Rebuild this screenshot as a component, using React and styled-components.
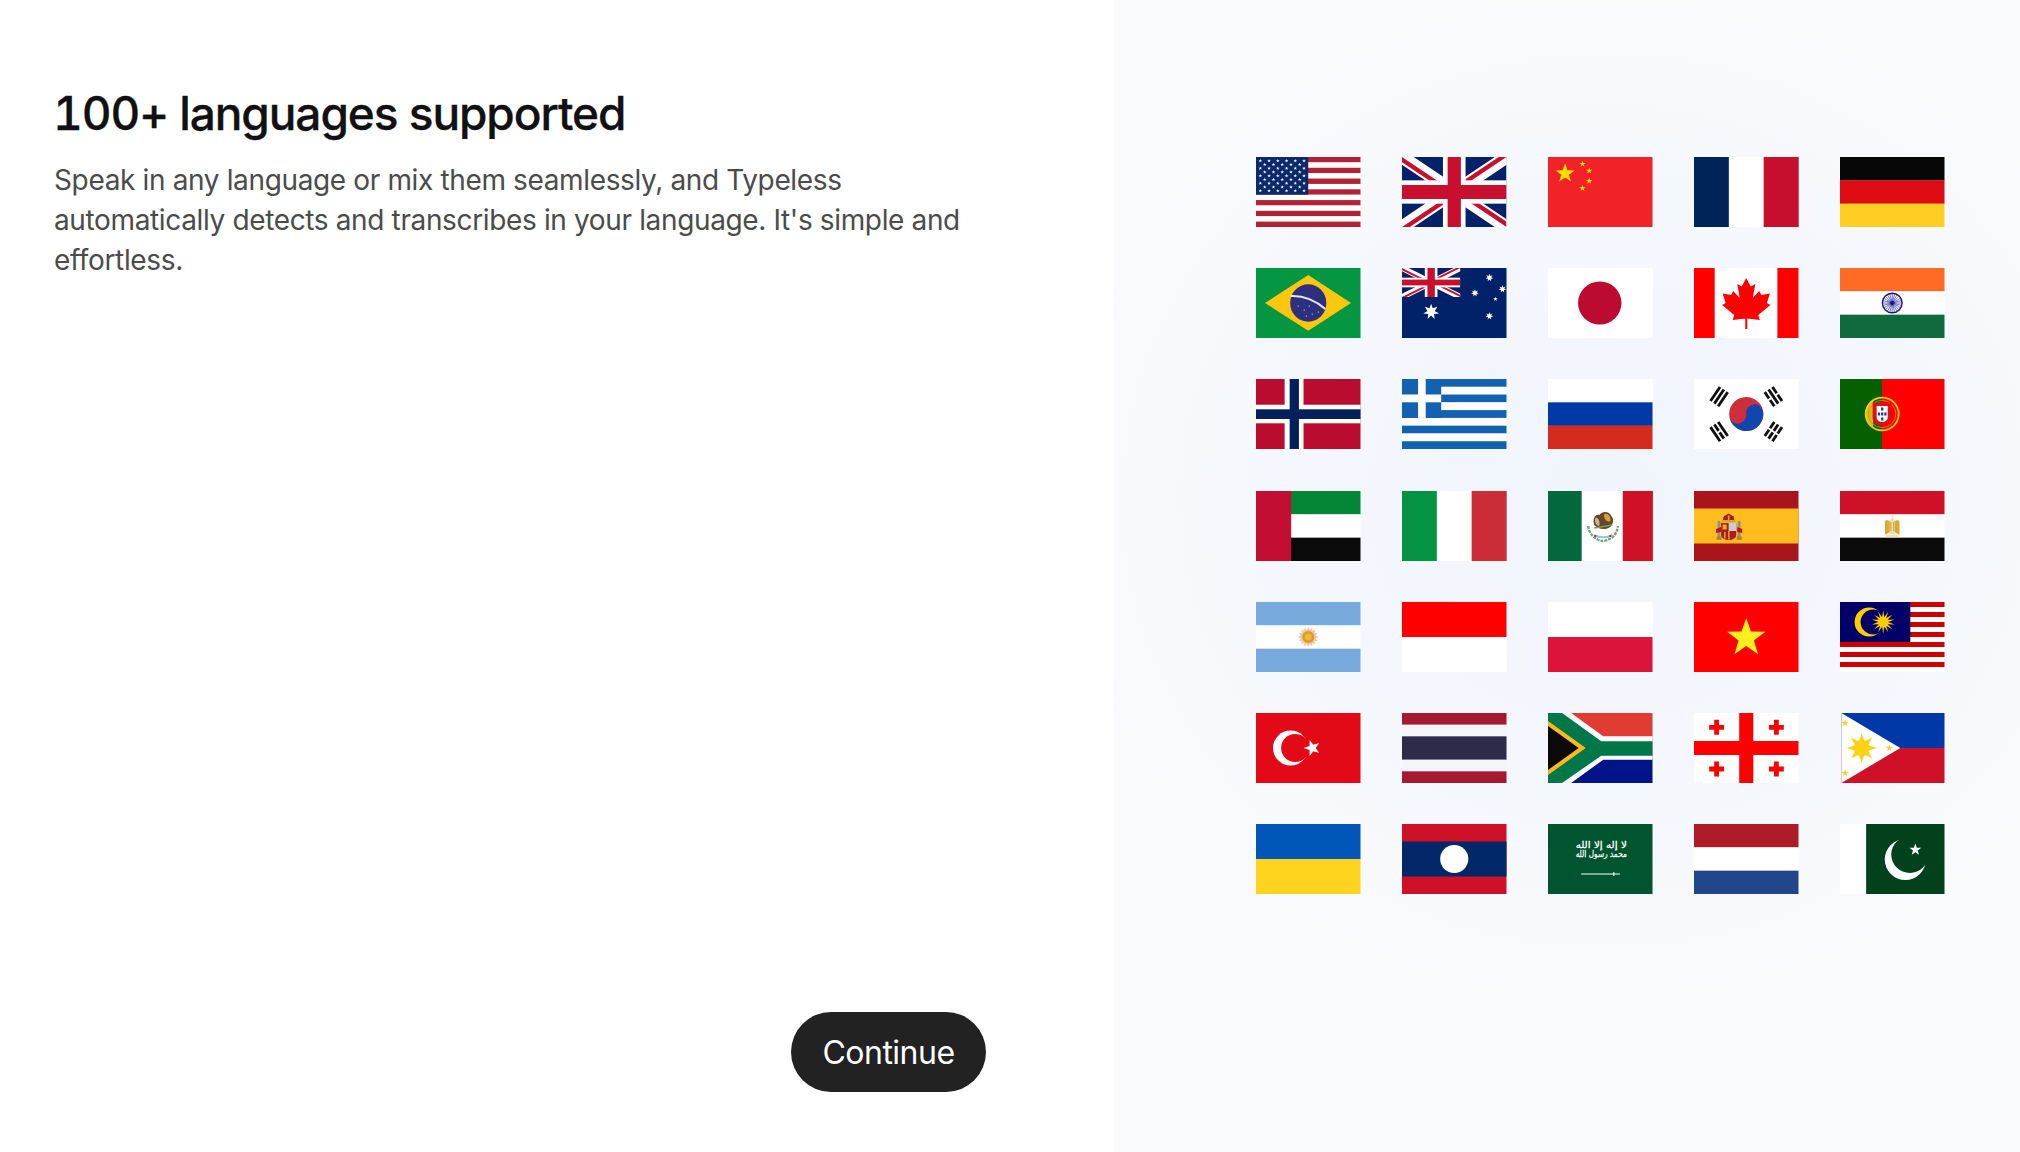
import React from "react";
import styled, { createGlobalStyle } from "styled-components";

const GlobalStyle = createGlobalStyle`
  html, body {
    margin: 0;
    padding: 0;
    background: #fff;
  }
  body {
    font-family: Inter, "Liberation Sans", sans-serif;
    overflow: hidden;
  }
`;

const Page = styled.div`
  display: grid;
  grid-template-columns: 1114px 1fr;
  width: 2020px;
  height: 1152px;
`;

const Intro = styled.section`
  display: flex;
  flex-direction: column;
  padding: 84px 128px 60px 54px;
  background: #fff;
`;

const Title = styled.h1`
  margin: 0 0 18px -1px;
  font-size: 46px;
  line-height: 58px;
  font-weight: 500;
  letter-spacing: -1.08px;
  font-variant-numeric: tabular-nums;
  -webkit-text-stroke: 0.3px #111;
  color: #111;
`;

const Lead = styled.p`
  margin: 0;
  width: 960px;
  font-size: 28px;
  line-height: 40px;
  font-weight: 400;
  letter-spacing: -0.36px;
  color: #4b4b4b;
`;

const ContinueButton = styled.button`
  align-self: flex-end;
  margin-top: auto;
  width: 195px;
  height: 80px;
  border: 0;
  border-radius: 40px;
  background: #222;
  color: #fff;
  font-family: inherit;
  font-size: 32px;
  font-weight: 400;
  letter-spacing: -0.5px;
`;

const FlagPanel = styled.aside`
  padding: 157px 0 0 142px;
  background: radial-gradient(ellipse 560px 520px at 490px 500px, #f0f4fc 0%, #f4f7fc 55%, #f9fafc 100%);
`;

const FlagGrid = styled.div`
  display: grid;
  grid-template-columns: repeat(5, 104.5px);
  grid-auto-rows: 70px;
  column-gap: 41.5px;
  row-gap: 41.2px;
`;

const Flag = styled.svg`
  display: block;
  width: 104.5px;
  height: 70px;
`;

// points for an n-pointed star
const star = (cx, cy, r, n = 5, inner = r * 0.4) => {
  const pts = [];
  for (let i = 0; i < n * 2; i++) {
    const rad = i % 2 ? inner : r;
    const a = (Math.PI * i) / n - Math.PI / 2;
    pts.push(`${(cx + rad * Math.cos(a)).toFixed(2)},${(cy + rad * Math.sin(a)).toFixed(2)}`);
  }
  return pts.join(" ");
};

const HBars = ({ colors }) =>
  colors.map((c, i) => (
    <rect key={i} x="0" y={(70 / colors.length) * i} width="104" height={70 / colors.length + 0.2} fill={c} />
  ));

const VBars = ({ colors }) =>
  colors.map((c, i) => (
    <rect key={i} x={(104 / colors.length) * i} y="0" width={104 / colors.length + 0.2} height="70" fill={c} />
  ));

const Union = ({ id, width, height }) => (
  <svg x="0" y="0" width={width} height={height} viewBox="0 0 60 30" preserveAspectRatio="none">
    <clipPath id={id}>
      <path d="M30 15h30v15zv15H0zH0V0zV0h30z" />
    </clipPath>
    <rect width="60" height="30" fill="#012169" />
    <path d="M0 0L60 30M60 0L0 30" stroke="#fff" strokeWidth="6" />
    <path d="M0 0L60 30M60 0L0 30" stroke="#c8102e" strokeWidth="4" clipPath={`url(#${id})`} />
    <rect x="23.5" width="13" height="30" fill="#fff" />
    <rect y="10" width="60" height="10" fill="#fff" />
    <rect x="26.2" width="7.6" height="30" fill="#c8102e" />
    <rect y="12" width="60" height="6" fill="#c8102e" />
  </svg>
);

const Trigram = ({ cx, cy, angle, breaks }) => (
  <g transform={`rotate(${angle} ${cx} ${cy})`} fill="#111">
    {[-4.6, 0, 4.6].map((off, i) =>
      breaks[i] ? (
        <g key={i}>
          <rect x={cx - 8.5} y={cy + off - 1.4} width="7.6" height="2.8" />
          <rect x={cx + 0.9} y={cy + off - 1.4} width="7.6" height="2.8" />
        </g>
      ) : (
        <rect key={i} x={cx - 8.5} y={cy + off - 1.4} width="17" height="2.8" />
      )
    )}
  </g>
);

const flags = [
  {
    name: "United States",
    art: (
      <>
        {Array.from({ length: 13 }, (_, i) => (
          <rect key={i} y={(70 / 13) * i} width="104" height={70 / 13 + 0.1} fill={i % 2 ? "#fff" : "#b22234"} />
        ))}
        <rect width="52" height="37.7" fill="#0a2a6b" />
        {Array.from({ length: 9 }, (_, r) =>
          Array.from({ length: r % 2 ? 5 : 6 }, (_, c) => (
            <polygon
              key={`${r}-${c}`}
              points={star((r % 2 ? 8.7 : 4.3) + c * 8.7, 3.8 + r * 3.75, 1.9, 5, 0.8)}
              fill="#fff"
            />
          ))
        )}
      </>
    ),
  },
  { name: "United Kingdom", art: <Union id="uk-clip" width="104" height="70" /> },
  {
    name: "China",
    art: (
      <>
        <rect width="104" height="70" fill="#f12228" />
        <polygon points={star(17, 16.5, 10)} fill="#ffde00" />
        <polygon points={star(34.4, 7, 3.3)} fill="#ffde00" />
        <polygon points={star(41, 13.7, 3.3)} fill="#ffde00" />
        <polygon points={star(41, 24, 3.3)} fill="#ffde00" />
        <polygon points={star(34.4, 31.3, 3.3)} fill="#ffde00" />
      </>
    ),
  },
  { name: "France", art: <VBars colors={["#012458", "#fff", "#c60f2e"]} /> },
  { name: "Germany", art: <HBars colors={["#070707", "#dd0c13", "#ffce22"]} /> },
  {
    name: "Brazil",
    art: (
      <>
        <rect width="104" height="70" fill="#059641" />
        <polygon points="9,35 52,7 94.6,35 52,62.7" fill="#fdc70f" />
        <ellipse cx="52" cy="35" rx="18" ry="18.7" fill="#2d307e" />
        <path d="M34.5 28C47 27 60 33 69 41" fill="none" stroke="#e6e6e6" strokeWidth="2" />
        {[[42, 38], [48, 42], [53, 38], [56, 46], [62, 44], [50, 48]].map(([x, y]) => (
          <circle key={`${x}-${y}`} cx={x} cy={y} r="0.6" fill="#fff" />
        ))}
      </>
    ),
  },
  {
    name: "Australia",
    art: (
      <>
        <rect width="104" height="70" fill="#012169" />
        <Union id="au-clip" width="58" height="29" />
        <polygon points={star(29, 43.7, 8, 7, 3.7)} fill="#fff" />
        <polygon points={star(87, 9.7, 4, 7, 1.8)} fill="#fff" />
        <polygon points={star(100, 21, 4, 7, 1.8)} fill="#fff" />
        <polygon points={star(72.6, 25, 4, 7, 1.8)} fill="#fff" />
        <polygon points={star(93, 31, 2.3, 5, 1)} fill="#fff" />
        <polygon points={star(87, 48, 4, 7, 1.8)} fill="#fff" />
      </>
    ),
  },
  {
    name: "Japan",
    art: (
      <>
        <rect width="104" height="70" fill="#fff" />
        <circle cx="51.5" cy="35" r="21.6" fill="#bc0a30" />
      </>
    ),
  },
  {
    name: "Canada",
    art: (
      <>
        <rect width="104" height="70" fill="#fff" />
        <rect width="20.6" height="70" fill="#ff0000" />
        <rect x="83" width="21" height="70" fill="#ff0000" />
        <polygon
          points="52,10 56.5,18.5 61,16 58.5,30 65,23 67,27 75.5,25.5 72.5,35 76,37 64,47 65.5,52 53,50.5 53,61 51,61 51,50.5 38.5,52 40,47 28,37 31.5,35 28.5,25.5 37,27 39,23 45.5,30 43,16 47.5,18.5"
          fill="#ff0000"
        />
      </>
    ),
  },
  {
    name: "India",
    art: (
      <>
        <HBars colors={["#ff6a24", "#fff", "#0f6a3e"]} />
        <circle cx="52" cy="35" r="9.8" fill="#fff" stroke="#14148c" strokeWidth="1.4" />
        {Array.from({ length: 24 }, (_, i) => (
          <line
            key={i}
            x1="52"
            y1="35"
            x2={52 + 9 * Math.cos((i * Math.PI) / 12)}
            y2={35 + 9 * Math.sin((i * Math.PI) / 12)}
            stroke="#14148c"
            strokeWidth="0.6"
          />
        ))}
        <circle cx="52" cy="35" r="2" fill="#14148c" />
      </>
    ),
  },
  {
    name: "Norway",
    art: (
      <>
        <rect width="104" height="70" fill="#ba0c2f" />
        <rect x="28.5" width="18.8" height="70" fill="#fff" />
        <rect y="25.7" width="104" height="18.6" fill="#fff" />
        <rect x="33.5" width="9.2" height="70" fill="#00205b" />
        <rect y="30.3" width="104" height="9.7" fill="#00205b" />
      </>
    ),
  },
  {
    name: "Greece",
    art: (
      <>
        {Array.from({ length: 9 }, (_, i) => (
          <rect key={i} y={(70 / 9) * i} width="104" height={70 / 9 + 0.1} fill={i % 2 ? "#fff" : "#1361b1"} />
        ))}
        <rect width="39" height="38.9" fill="#1361b1" />
        <rect x="16" width="7.6" height="38.9" fill="#fff" />
        <rect y="15.5" width="39" height="7.8" fill="#fff" />
      </>
    ),
  },
  { name: "Russia", art: <HBars colors={["#fff", "#0038a5", "#d52b1e"]} /> },
  {
    name: "South Korea",
    art: (
      <>
        <rect width="104" height="70" fill="#fff" />
        <g transform="rotate(-8 52 35)">
          <circle cx="52" cy="35" r="17" fill="#cd2e3a" />
          <path d="M35 35A8.5 8.5 0 0 0 52 35A8.5 8.5 0 0 1 69 35A17 17 0 0 1 35 35Z" fill="#0f47af" />
        </g>
        <Trigram cx={25} cy={17.6} angle={-56} breaks={[false, false, false]} />
        <Trigram cx={79} cy={17.6} angle={56} breaks={[true, false, true]} />
        <Trigram cx={25} cy={52.6} angle={56} breaks={[false, true, false]} />
        <Trigram cx={79} cy={52.6} angle={-56} breaks={[true, true, true]} />
      </>
    ),
  },
  {
    name: "Portugal",
    art: (
      <>
        <rect width="104" height="70" fill="#ff0000" />
        <rect width="41.8" height="70" fill="#056100" />
        <path d="M25.5 35A16.4 16.4 0 0 1 33 21L33 48A16.4 16.4 0 0 1 25.5 35Z" fill="#d9b81c" />
        <circle cx="42" cy="35" r="16.4" fill="none" stroke="#f0cf14" strokeWidth="1.8" />
        <circle cx="42" cy="35" r="13.6" fill="none" stroke="#c8a010" strokeWidth="0.8" />
        <path d="M32.5 23.5H51.5V39.5A9.5 7.5 0 0 1 32.5 39.5Z" fill="#e01010" />
        <path d="M36.5 27H47.5V38.5A5.5 4.5 0 0 1 36.5 38.5Z" fill="#fff" />
        {[[42, 30], [38.8, 35], [42, 35], [45.2, 35], [42, 40]].map(([x, y]) => (
          <rect key={`${x}-${y}`} x={x - 1.1} y={y - 1.5} width="2.2" height="3" fill="#1a3a9a" />
        ))}
      </>
    ),
  },
  {
    name: "United Arab Emirates",
    art: (
      <>
        <HBars colors={["#058536", "#fff", "#0a0a0a"]} />
        <rect width="35" height="70" fill="#c20e32" />
      </>
    ),
  },
  { name: "Italy", art: <VBars colors={["#049343", "#fff", "#cc2b38"]} /> },
  {
    name: "Mexico",
    art: (
      <>
        <rect width="104" height="70" fill="#fff" />
        <rect width="33.5" height="70" fill="#04683f" />
        <rect x="74.4" width="30" height="70" fill="#ce1126" />
        <path d="M40 35C41 45 50 50 54.5 50C60 50 69 45 69.5 35" fill="none" stroke="#6fa585" strokeWidth="2.4" strokeDasharray="3 1" />
        <path d="M46 44C50 47 60 47 64 44" fill="none" stroke="#9cc0cc" strokeWidth="2.2" />
        <path d="M46 34C44 28 47 23 51 24C54 20 61 20 63 25C66 28 65 33 62 36C58 39 50 39 46 34Z" fill="#6a4522" />
        <path d="M56 23C60 22 63 26 62 30C59 32 55 28 56 23Z" fill="#c9a24a" />
        <path d="M47 27C50 26 52 30 51 35C48 35 46 31 47 27Z" fill="#c8b48a" />
        <path d="M46 37L64 34" stroke="#7f9a60" strokeWidth="1.6" />
        <circle cx="47" cy="45" r="1.1" fill="#ce1126" />
        <circle cx="62" cy="45" r="1.1" fill="#ce1126" />
      </>
    ),
  },
  {
    name: "Spain",
    art: (
      <>
        <rect width="104" height="70" fill="#aa151b" />
        <rect y="17.5" width="104" height="35" fill="#fdbd1f" />
        {/* pillars */}
        <rect x="23.5" y="30" width="2.8" height="16" fill="#8f8f8f" />
        <rect x="43.5" y="30" width="2.8" height="16" fill="#8f8f8f" />
        <rect x="22.5" y="45.5" width="5" height="3.4" fill="#a88a20" />
        <rect x="42.5" y="45.5" width="5" height="3.4" fill="#a88a20" />
        <path d="M22 38L27 36V41L22 42ZM48 38L43 36V41L48 42Z" fill="#c01028" />
        {/* shield */}
        <path d="M27 32H42V44C42 47 38 49 34.5 49C31 49 27 47 27 44Z" fill="#a81c20" />
        <rect x="34.5" y="32" width="7.5" height="8" fill="#c9ccd8" />
        <rect x="28.5" y="33.5" width="4" height="5" fill="#e8b020" />
        <rect x="34" y="40" width="1.4" height="8.5" fill="#e8b020" />
        <rect x="30" y="41" width="1.4" height="6.5" fill="#e8b020" />
        <circle cx="39" cy="44.5" r="2.6" fill="#c01028" />
        {/* crown */}
        <path d="M28.5 31L29.5 25.5L32 24L34.5 22.4L37 24L39.5 25.5L40.5 31Z" fill="#a81c20" />
        <rect x="28.5" y="29" width="12" height="2.2" fill="#d9a820" />
        <rect x="33.7" y="24.5" width="1.6" height="4.5" fill="#d9a820" />
      </>
    ),
  },
  {
    name: "Egypt",
    art: (
      <>
        <HBars colors={["#ce1126", "#fff", "#0a0a0a"]} />
        <path d="M51.5 24.5H53V27.5L55 30V43H49V30L51.5 27.5Z" fill="#f0dcae" />
        <path d="M46.5 29L49.5 30V41L46 43.5H44.8V30Z" fill="#dba93a" />
        <path d="M57.5 29L54.5 30V41L58 43.5H59.2V30Z" fill="#dba93a" />
        <rect x="50" y="31" width="1.2" height="9" fill="#dba93a" />
        <rect x="52.8" y="31" width="1.2" height="9" fill="#dba93a" />
        <path d="M46 43.5H58L59 46.3H45Z" fill="#f3e3bd" />
      </>
    ),
  },
  {
    name: "Argentina",
    art: (
      <>
        <HBars colors={["#79aade", "#fff", "#79aade"]} />
        <polygon points={star(52, 35, 10, 16, 7.5)} fill="#f2c9a4" />
        <circle cx="52" cy="35" r="6" fill="#dc9a28" />
        <circle cx="52" cy="35" r="3.4" fill="#efb73e" />
      </>
    ),
  },
  { name: "Indonesia", art: <HBars colors={["#ff0000", "#fff"]} /> },
  { name: "Poland", art: <HBars colors={["#fff", "#dc143c"]} /> },
  {
    name: "Vietnam",
    art: (
      <>
        <rect width="104" height="70" fill="#ff0000" />
        <polygon points={star(52, 36, 20)} fill="#ffef1c" />
      </>
    ),
  },
  {
    name: "Malaysia",
    art: (
      <>
        {Array.from({ length: 14 }, (_, i) => (
          <rect key={i} y={5 * i} width="104" height="5.1" fill={i % 2 ? "#fff" : "#cc0001"} />
        ))}
        <rect width="70" height="40" fill="#010066" />
        <circle cx="29" cy="20" r="14.5" fill="#ffcc00" />
        <circle cx="33" cy="20" r="12.5" fill="#010066" />
        <polygon points={star(43, 20, 11.5, 14, 5)} fill="#ffcc00" />
      </>
    ),
  },
  {
    name: "Turkey",
    art: (
      <>
        <rect width="104" height="70" fill="#e30a17" />
        <circle cx="34.4" cy="35" r="17.5" fill="#fff" />
        <circle cx="39" cy="35" r="14" fill="#e30a17" />
        <polygon points={star(56, 35, 8.5)} fill="#fff" transform="rotate(-90 56 35)" />
      </>
    ),
  },
  {
    name: "Thailand",
    art: <HBars colors={["#a51931", "#f4f5f8", "#2d2a4a", "#2d2a4a", "#f4f5f8", "#a51931"]} />,
  },
  {
    name: "South Africa",
    art: (
      <>
        <rect width="104" height="35" fill="#e03c31" />
        <rect y="35" width="104" height="35" fill="#001489" />
        <polygon points="14,0 23,0 55,23.3 104,23.3 104,46.7 55,46.7 23,70 14,70 0,70 0,0" fill="#fff" />
        <polygon points="0,0 14,0 53,28.3 104,28.3 104,42.7 53,42.7 14,70 0,70" fill="#007749" />
        <polygon points="0,8 37.6,35 0,62" fill="#ffb81c" />
        <polygon points="0,13 30.5,35 0,57" fill="#0a0a0a" />
      </>
    ),
  },
  {
    name: "Georgia",
    art: (
      <>
        <rect width="104" height="70" fill="#fff" />
        <rect x="45" width="14" height="70" fill="#ff0000" />
        <rect y="28" width="104" height="14" fill="#ff0000" />
        {[[22.5, 14.3], [82, 14.3], [22.5, 56], [82, 56]].map(([x, y]) => (
          <path
            key={`${x}-${y}`}
            d={`M${x - 2.4} ${y - 7.5}h4.8v5.1h5v4.8h-5v5.1h-4.8v-5.1h-5v-4.8h5z`}
            fill="#ff0000"
          />
        ))}
      </>
    ),
  },
  {
    name: "Philippines",
    art: (
      <>
        <rect width="104" height="35" fill="#0038a8" />
        <rect y="35" width="104" height="35" fill="#ce1126" />
        <rect width="1.4" height="70" fill="#f9fafc" />
        <polygon points="1.4,0 60,35 1.4,70" fill="#fff" />
        <polygon points={star(21.6, 35, 15, 8, 7)} fill="#fcd116" />
        <circle cx="21.6" cy="35" r="8" fill="#fcd116" />
        <polygon points={star(5, 10, 3.6)} fill="#fcd116" />
        <polygon points={star(5, 60, 3.6)} fill="#fcd116" />
        <polygon points={star(49, 35, 3.6)} fill="#fcd116" />
      </>
    ),
  },
  { name: "Ukraine", art: <HBars colors={["#0057b8", "#ffd41f"]} /> },
  {
    name: "Laos",
    art: (
      <>
        <rect width="104" height="70" fill="#ce1126" />
        <rect y="17.5" width="104" height="35" fill="#002868" />
        <circle cx="52" cy="35" r="14" fill="#fff" />
      </>
    ),
  },
  {
    name: "Saudi Arabia",
    art: (
      <>
        <rect width="104" height="70" fill="#005430" />
        <text
          x="27.5"
          y="24"
          fontFamily="'DejaVu Sans', sans-serif"
          fontSize="9"
          fill="#fff"
          stroke="#fff"
          strokeWidth="0.25"
          textLength="51"
          lengthAdjust="spacingAndGlyphs"
        >
          لا إله إلا الله
        </text>
        <text
          x="27.5"
          y="33"
          fontFamily="'DejaVu Sans', sans-serif"
          fontSize="9"
          fill="#fff"
          stroke="#fff"
          strokeWidth="0.25"
          textLength="51"
          lengthAdjust="spacingAndGlyphs"
        >
          محمد رسول الله
        </text>
        <path d="M33 50H71.5" stroke="#fff" strokeWidth="1" />
        <path d="M65.5 48V52" stroke="#fff" strokeWidth="1" />
      </>
    ),
  },
  { name: "Netherlands", art: <HBars colors={["#ae1c28", "#fff", "#21468b"]} /> },
  {
    name: "Pakistan",
    art: (
      <>
        <rect width="104" height="70" fill="#01411c" />
        <rect width="26" height="70" fill="#fff" />
        <circle cx="65" cy="35.5" r="20.5" fill="#fff" />
        <circle cx="69.5" cy="30.5" r="18.5" fill="#01411c" />
        <polygon points={star(75, 25.7, 6.2)} fill="#fff" />
      </>
    ),
  },
];

const App = () => {
  return (
    <Page>
      <GlobalStyle />
      <Intro>
        <Title>100+ languages supported</Title>
        <Lead>
          Speak in any language or mix them seamlessly, and Typeless
          <br />
          automatically detects and transcribes in your language. It's simple and
          <br />
          effortless.
        </Lead>
        <ContinueButton>Continue</ContinueButton>
      </Intro>
      <FlagPanel>
        <FlagGrid>
          {flags.map((f) => (
            <Flag key={f.name} viewBox="0 0 104 70" preserveAspectRatio="none" role="img" aria-label={f.name}>
              {f.art}
            </Flag>
          ))}
        </FlagGrid>
      </FlagPanel>
    </Page>
  );
};

export default App;
